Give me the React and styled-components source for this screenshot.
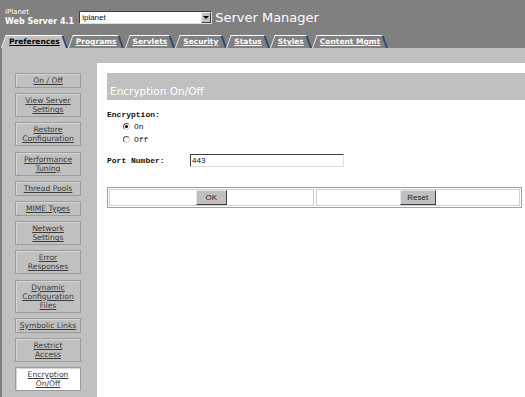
import React from "react";
import styled, { createGlobalStyle } from "styled-components";

const GlobalStyle = createGlobalStyle`
  html, body {
    margin: 0;
    padding: 0;
    background: #ffffff;
    overflow: hidden;
  }
  body {
    font-family: "DejaVu Sans", Verdana, sans-serif;
  }
`;

const Page = styled.div`
  width: 525px;
  height: 397px;
  display: flex;
  flex-direction: column;
  overflow: hidden;
`;

const Header = styled.div`
  background: #808080;
  height: 48px;
  display: flex;
  flex-direction: column;
`;

const TopRow = styled.div`
  height: 34px;
  display: flex;
  align-items: center;
  padding-left: 5px;
`;

const Brand = styled.div`
  color: #ffffff;
  display: flex;
  flex-direction: column;
`;

const BrandSmall = styled.span`
  font-size: 7px;
  line-height: 9px;
`;

const BrandBig = styled.span`
  font-size: 8px;
  line-height: 10px;
  font-weight: bold;
`;

const FakeSelect = styled.div`
  margin-left: 5px;
  width: 133px;
  height: 13px;
  box-sizing: border-box;
  background: #ffffff;
  border: 1px solid;
  border-color: #404040 #e0e0e0 #e0e0e0 #404040;
  display: flex;
  align-items: center;
  justify-content: space-between;
  font-family: "Liberation Sans", Arial, sans-serif;
  font-size: 8px;
  color: #111;
  padding-left: 2px;
`;

const SelectArrow = styled.span`
  width: 10px;
  height: 11px;
  box-sizing: border-box;
  background: #c0c0c0;
  border: 1px solid;
  border-color: #eeeeee #404040 #404040 #eeeeee;
  display: flex;
  align-items: center;
  justify-content: center;
  &::after {
    content: "";
    border-left: 3px solid transparent;
    border-right: 3px solid transparent;
    border-top: 3px solid #000;
  }
`;

const AppTitle = styled.span`
  margin-left: 3px;
  color: #ffffff;
  font-size: 13px;
`;

const TabRow = styled.div`
  height: 14px;
  display: flex;
  align-items: flex-end;
  padding-left: 1px;
`;

const Tab = styled.div`
  position: relative;
  isolation: isolate;
  height: 13px;
  padding: 0 8px;
  display: flex;
  align-items: center;
  font-size: 7.5px;
  font-weight: bold;
  text-decoration: underline;
  color: ${(p) => (p.$active ? "#000000" : "#ffffff")};
  white-space: nowrap;

  &::before,
  &::after {
    content: "";
    position: absolute;
    top: 0;
    bottom: 0;
    width: 60%;
    box-sizing: border-box;
    background: ${(p) => (p.$active ? "#c0c0c0" : "#808080")};
    border-top: 1px solid #ffffff;
    z-index: -1;
  }
  &::before {
    left: 0;
    transform: skewX(-20deg);
    transform-origin: bottom left;
    border-left: 1px solid #e8e8e8;
  }
  &::after {
    right: 0;
    transform: skewX(20deg);
    transform-origin: bottom right;
    border-right: 2px solid #2b4a74;
  }
`;

const Body = styled.div`
  flex: 1;
  display: flex;
  background: #c0c0c0;
  border-left: 2px solid #808080;
`;

const Sidebar = styled.div`
  width: 95px;
  flex-shrink: 0;
  box-sizing: border-box;
  padding: 25px 0 0 13px;
  display: flex;
  flex-direction: column;
  gap: 5.2px;
`;

const NavButton = styled.div`
  width: 66px;
  box-sizing: border-box;
  padding: 2px 1px;
  border: 1px solid #9c9c9c;
  box-shadow: inset 1px 1px 0 #d6d6d6;
  background: ${(p) => (p.$selected ? "#ffffff" : "#c0c0c0")};
  text-align: center;
  font-size: 7.6px;
  line-height: 9px;
  color: #3a3a3a;
  text-decoration: underline;
`;

const Main = styled.div`
  flex: 1;
  margin-top: 15px;
  background: #ffffff;
  padding: 10px 0 0 10px;
  display: flex;
  flex-direction: column;
`;

const TitleBar = styled.div`
  height: 27px;
  box-sizing: border-box;
  background: #c0c0c0;
  color: #ffffff;
  font-size: 10.5px;
  display: flex;
  align-items: flex-end;
  padding: 0 0 3px 3px;
`;

const Form = styled.div`
  padding-top: 10px;
  font-family: "Liberation Mono", "Courier New", monospace;
  font-size: 8px;
  color: #111;
`;

const FieldLabel = styled.div`
  font-weight: bold;
  line-height: 10px;
  width: ${(p) => p.$width || "auto"};
  flex-shrink: 0;
`;

const RadioGroup = styled.div`
  display: flex;
  flex-direction: column;
  padding: 0 0 0 16px;
`;

const RadioRow = styled.div`
  display: flex;
  align-items: center;
  height: 13px;
  gap: 4px;
`;

const RadioDot = styled.span`
  width: 7px;
  height: 7px;
  box-sizing: border-box;
  border-radius: 50%;
  border: 1px solid;
  border-color: #505050 #d8d8d8 #d8d8d8 #505050;
  background: #ffffff;
  display: flex;
  align-items: center;
  justify-content: center;
  &::after {
    content: "";
    width: 3px;
    height: 3px;
    border-radius: 50%;
    background: ${(p) => (p.$checked ? "#000" : "transparent")};
  }
`;

const PortRow = styled.div`
  display: flex;
  align-items: center;
  margin-top: 8px;
`;

const TextInput = styled.div`
  width: 154px;
  height: 13px;
  box-sizing: border-box;
  border: 1px solid;
  border-color: #404040 #e0e0e0 #e0e0e0 #404040;
  font-family: "Liberation Sans", Arial, sans-serif;
  font-size: 8px;
  line-height: 11px;
  padding-left: 1px;
  color: #111;
`;

const ButtonTable = styled.div`
  margin-top: 20px;
  width: 415px;
  box-sizing: border-box;
  border: 1px solid #a0a0a0;
  padding: 1px;
  display: flex;
  gap: 2px;
`;

const ButtonCell = styled.div`
  flex: 1;
  height: 17px;
  box-sizing: border-box;
  border: 1px solid #d0d0d0;
  display: flex;
  align-items: center;
  justify-content: center;
`;

const GrayButton = styled.div`
  width: ${(p) => p.$width}px;
  height: 15px;
  box-sizing: border-box;
  background: #c0c0c0;
  border: 1px solid;
  border-color: #e6e6e6 #404040 #404040 #e6e6e6;
  font-family: "Liberation Sans", Arial, sans-serif;
  font-size: 8px;
  color: #222;
  display: flex;
  align-items: center;
  justify-content: center;
`;

const tabs = [
  "Preferences",
  "Programs",
  "Servlets",
  "Security",
  "Status",
  "Styles",
  "Content Mgmt",
];

const navItems = [
  ["On / Off"],
  ["View Server", "Settings"],
  ["Restore", "Configuration"],
  ["Performance", "Tuning"],
  ["Thread Pools"],
  ["MIME Types"],
  ["Network", "Settings"],
  ["Error", "Responses"],
  ["Dynamic", "Configuration", "Files"],
  ["Symbolic Links"],
  ["Restrict", "Access"],
  ["Encryption", "On/Off"],
];

const App = () => {
  return (
    <Page>
      <GlobalStyle />
      <Header>
        <TopRow>
          <Brand>
            <BrandSmall>iPlanet</BrandSmall>
            <BrandBig>Web Server 4.1</BrandBig>
          </Brand>
          <FakeSelect>
            iplanet
            <SelectArrow />
          </FakeSelect>
          <AppTitle>Server Manager</AppTitle>
        </TopRow>
        <TabRow>
          {tabs.map((t, idx) => (
            <Tab key={t} $active={idx === 0}>
              {t}
            </Tab>
          ))}
        </TabRow>
      </Header>
      <Body>
        <Sidebar>
          {navItems.map((lines, idx) => (
            <NavButton key={idx} $selected={idx === navItems.length - 1}>
              {lines.map((l, i) => (
                <div key={i}>{l}</div>
              ))}
            </NavButton>
          ))}
        </Sidebar>
        <Main>
          <TitleBar>Encryption On/Off</TitleBar>
          <Form>
            <FieldLabel>Encryption:</FieldLabel>
            <RadioGroup>
              <RadioRow>
                <RadioDot $checked />
                On
              </RadioRow>
              <RadioRow>
                <RadioDot />
                Off
              </RadioRow>
            </RadioGroup>
            <PortRow>
              <FieldLabel $width="83px">Port Number:</FieldLabel>
              <TextInput>443</TextInput>
            </PortRow>
          </Form>
          <ButtonTable>
            <ButtonCell>
              <GrayButton $width={31}>OK</GrayButton>
            </ButtonCell>
            <ButtonCell>
              <GrayButton $width={36}>Reset</GrayButton>
            </ButtonCell>
          </ButtonTable>
        </Main>
      </Body>
    </Page>
  );
};

export default App;
